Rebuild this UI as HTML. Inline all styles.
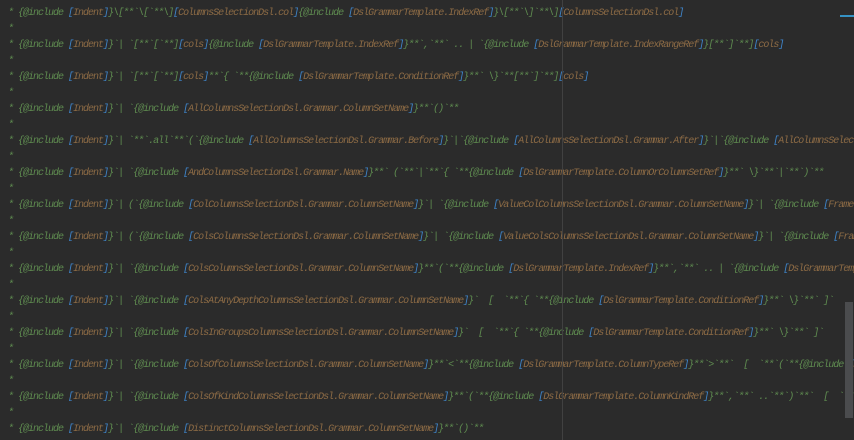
<!DOCTYPE html>
<html><head><meta charset="utf-8"><style>
html,body{margin:0;padding:0;}
body{width:854px;height:440px;background:#2b2b2b;overflow:hidden;position:relative;}
.code{position:absolute;left:8px;top:6px;width:846px;height:434px;overflow:hidden;font-family:"Liberation Mono",monospace;font-style:italic;font-size:10px;letter-spacing:-1px;line-height:16px;color:#5f8c50;white-space:pre;}
.l{color:#8d6b45}
.b{color:#3f86cc}
.guide{position:absolute;left:562px;top:0;width:1px;height:440px;background:#414141;}
.mark{position:absolute;left:840px;top:15px;width:14px;height:2px;background:#3592c4;}
.thumb{position:absolute;left:845px;top:302px;width:8px;height:116px;background:#4b4c4e;}
</style></head><body>
<div class="code">* {@include <span class="b">[</span><span class="l">Indent</span><span class="b">]</span>}\[**`\[`**\]<span class="b">[</span><span class="l">ColumnsSelectionDsl.col</span><span class="b">]</span>{@include <span class="b">[</span><span class="l">DslGrammarTemplate.IndexRef</span><span class="b">]</span>}\[**`\]`**\]<span class="b">[</span><span class="l">ColumnsSelectionDsl.col</span><span class="b">]</span>
*
* {@include <span class="b">[</span><span class="l">Indent</span><span class="b">]</span>}`| `[**`[`**]<span class="b">[</span><span class="l">cols</span><span class="b">]</span>{@include <span class="b">[</span><span class="l">DslGrammarTemplate.IndexRef</span><span class="b">]</span>}**`,`**` .. | `{@include <span class="b">[</span><span class="l">DslGrammarTemplate.IndexRangeRef</span><span class="b">]</span>}[**`]`**]<span class="b">[</span><span class="l">cols</span><span class="b">]</span>
*
* {@include <span class="b">[</span><span class="l">Indent</span><span class="b">]</span>}`| `[**`[`**]<span class="b">[</span><span class="l">cols</span><span class="b">]</span>**`{ `**{@include <span class="b">[</span><span class="l">DslGrammarTemplate.ConditionRef</span><span class="b">]</span>}**` \}`**[**`]`**]<span class="b">[</span><span class="l">cols</span><span class="b">]</span>
*
* {@include <span class="b">[</span><span class="l">Indent</span><span class="b">]</span>}`| `{@include <span class="b">[</span><span class="l">AllColumnsSelectionDsl.Grammar.ColumnSetName</span><span class="b">]</span>}**`()`**
*
* {@include <span class="b">[</span><span class="l">Indent</span><span class="b">]</span>}`| `**`.all`**`(`{@include <span class="b">[</span><span class="l">AllColumnsSelectionDsl.Grammar.Before</span><span class="b">]</span>}`|`{@include <span class="b">[</span><span class="l">AllColumnsSelectionDsl.Grammar.After</span><span class="b">]</span>}`|`{@include <span class="b">[</span><span class="l">AllColumnsSelectionDsl.Grammar.From</span><span class="b">]</span>}
*
* {@include <span class="b">[</span><span class="l">Indent</span><span class="b">]</span>}`| `{@include <span class="b">[</span><span class="l">AndColumnsSelectionDsl.Grammar.Name</span><span class="b">]</span>}**` (`**`|`**`{ `**{@include <span class="b">[</span><span class="l">DslGrammarTemplate.ColumnOrColumnSetRef</span><span class="b">]</span>}**` \}`**`|`**`)`**
*
* {@include <span class="b">[</span><span class="l">Indent</span><span class="b">]</span>}`| (`{@include <span class="b">[</span><span class="l">ColColumnsSelectionDsl.Grammar.ColumnSetName</span><span class="b">]</span>}`| `{@include <span class="b">[</span><span class="l">ValueColColumnsSelectionDsl.Grammar.ColumnSetName</span><span class="b">]</span>}`| `{@include <span class="b">[</span><span class="l">FrameColColumnsSelectionDsl</span><span class="b">]</span>}
*
* {@include <span class="b">[</span><span class="l">Indent</span><span class="b">]</span>}`| (`{@include <span class="b">[</span><span class="l">ColsColumnsSelectionDsl.Grammar.ColumnSetName</span><span class="b">]</span>}`| `{@include <span class="b">[</span><span class="l">ValueColsColumnsSelectionDsl.Grammar.ColumnSetName</span><span class="b">]</span>}`| `{@include <span class="b">[</span><span class="l">FrameColsColumnsSelectionDsl</span><span class="b">]</span>}
*
* {@include <span class="b">[</span><span class="l">Indent</span><span class="b">]</span>}`| `{@include <span class="b">[</span><span class="l">ColsColumnsSelectionDsl.Grammar.ColumnSetName</span><span class="b">]</span>}**`(`**{@include <span class="b">[</span><span class="l">DslGrammarTemplate.IndexRef</span><span class="b">]</span>}**`,`**` .. | `{@include <span class="b">[</span><span class="l">DslGrammarTemplate.IndexRangeRef</span><span class="b">]</span>}
*
* {@include <span class="b">[</span><span class="l">Indent</span><span class="b">]</span>}`| `{@include <span class="b">[</span><span class="l">ColsAtAnyDepthColumnsSelectionDsl.Grammar.ColumnSetName</span><span class="b">]</span>}`  [  `**`{ `**{@include <span class="b">[</span><span class="l">DslGrammarTemplate.ConditionRef</span><span class="b">]</span>}**` \}`**` ]`
*
* {@include <span class="b">[</span><span class="l">Indent</span><span class="b">]</span>}`| `{@include <span class="b">[</span><span class="l">ColsInGroupsColumnsSelectionDsl.Grammar.ColumnSetName</span><span class="b">]</span>}`  [  `**`{ `**{@include <span class="b">[</span><span class="l">DslGrammarTemplate.ConditionRef</span><span class="b">]</span>}**` \}`**` ]`
*
* {@include <span class="b">[</span><span class="l">Indent</span><span class="b">]</span>}`| `{@include <span class="b">[</span><span class="l">ColsOfColumnsSelectionDsl.Grammar.ColumnSetName</span><span class="b">]</span>}**`&lt;`**{@include <span class="b">[</span><span class="l">DslGrammarTemplate.ColumnTypeRef</span><span class="b">]</span>}**`&gt;`**`  [  `**`(`**{@include <span class="b">[</span><span class="l">DslGrammarTemplate</span><span class="b">]</span>}
*
* {@include <span class="b">[</span><span class="l">Indent</span><span class="b">]</span>}`| `{@include <span class="b">[</span><span class="l">ColsOfKindColumnsSelectionDsl.Grammar.ColumnSetName</span><span class="b">]</span>}**`(`**{@include <span class="b">[</span><span class="l">DslGrammarTemplate.ColumnKindRef</span><span class="b">]</span>}**`,`**` ..`**`)`**`  [  `**`{ `**
*
* {@include <span class="b">[</span><span class="l">Indent</span><span class="b">]</span>}`| `{@include <span class="b">[</span><span class="l">DistinctColumnsSelectionDsl.Grammar.ColumnSetName</span><span class="b">]</span>}**`()`**
</div>
<div class="guide"></div>
<div class="mark"></div>
<div class="thumb"></div>
</body></html>
